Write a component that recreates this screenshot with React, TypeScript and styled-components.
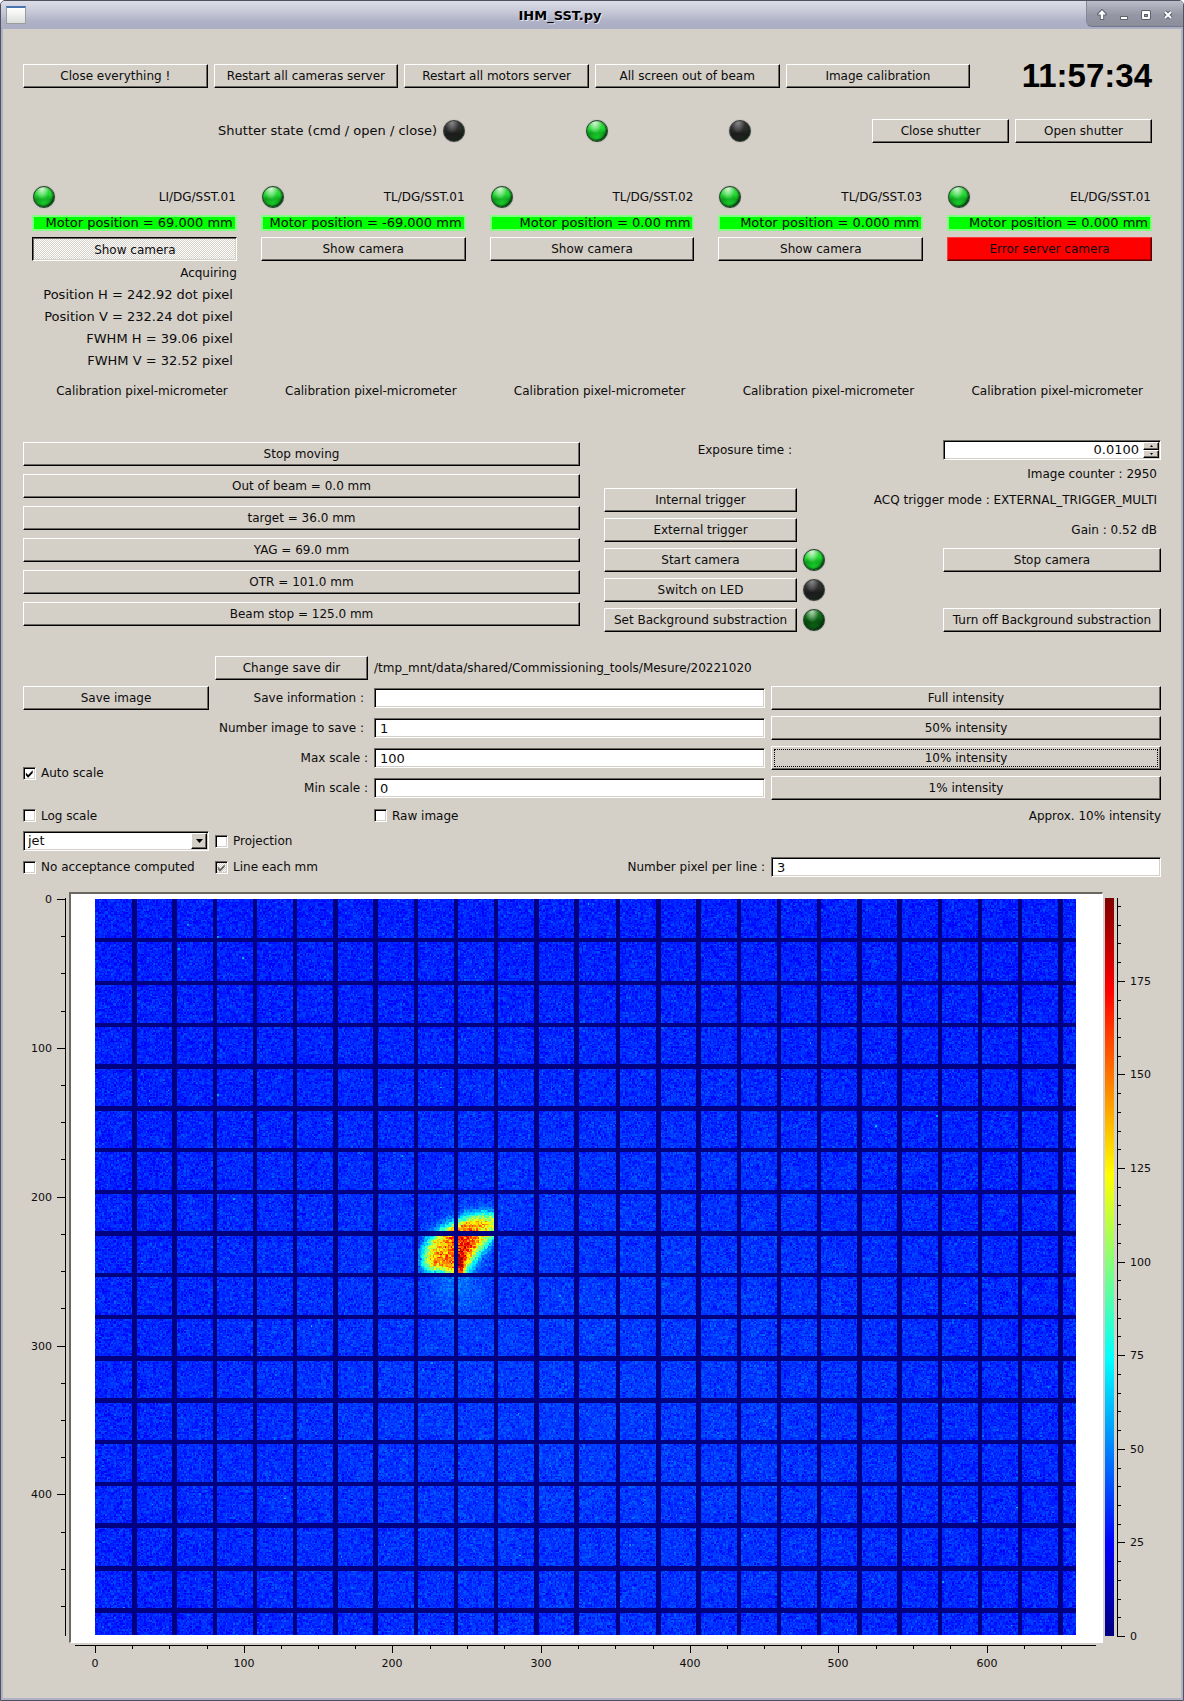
import React, { useEffect, useRef } from "react";
import styled, { createGlobalStyle, css } from "styled-components";

const FACE = "#d4cfc7";
const SHADE = "#6b6862";

const GlobalStyle = createGlobalStyle`
  *, *::before, *::after { box-sizing: border-box; }
  body {
    margin: 0;
    background: #fff;
    color: #0c0c0c;
    font: 12px/16px "DejaVu Sans", Verdana, sans-serif;
  }
  button, input, select { font: inherit; color: inherit; margin: 0; }
  input, select { font-size: 13px; }
`;

/* ---------- window chrome ---------- */

const Window = styled.div`
  min-height: 100vh;
  display: flex;
  flex-direction: column;
  border: 1px solid #50515f;
  border-radius: 5px 5px 0 0;
  background: #aeb1c5;
  overflow: hidden;
`;

const TitleBar = styled.header`
  height: 28px;
  display: flex;
  align-items: center;
  padding-left: 5px;
  background: linear-gradient(#dcdde7, #c3c5d5 45%, #b0b3c7 70%, #abaec3);
`;

const WindowIcon = styled.span`
  width: 20px;
  height: 18px;
  border: 1px solid #9a9c9e;
  border-top: 2px solid #4a74ad;
  background: linear-gradient(#ffffff, #dcdedb);
`;

const Title = styled.h1`
  flex: 1;
  margin: 0;
  padding: 2px 0 0 8px;
  font-size: 13px;
  line-height: 16px;
  font-weight: bold;
  text-align: center;
  color: #000;
  text-shadow: 1px 1px #e4e6f0;
`;

const WindowControls = styled.div`
  align-self: flex-start;
  height: 26px;
  display: flex;
  align-items: center;
  padding: 2px 4px 0 4px;
  border-left: 1px solid #85879a;
  border-bottom: 1px solid #74768a;
  border-bottom-left-radius: 6px;
  background: linear-gradient(#babcc8, #9597a5 55%, #8b8d9a);
`;

const ControlButton = styled.button`
  width: 22px;
  height: 22px;
  padding: 0;
  border: 0;
  background: none;
  display: grid;
  place-items: center;
`;

const Body = styled.main`
  flex: 1;
  margin: 0 2px 2px;
  padding: 35px 20px 29px;
  background: ${FACE};
`;

/* ---------- shared controls ---------- */

const Button = styled.button<{ $tone?: "pressed" | "error" | "focused" }>`
  width: 100%;
  height: 24px;
  padding: 0 2px 1px;
  border: 1px solid;
  border-color: #fff #000 #000 #fff;
  border-radius: 0;
  background: ${FACE};
  box-shadow: inset -1px -1px ${SHADE};
  line-height: 16px;
  text-align: center;
  white-space: nowrap;
  ${(p) =>
    p.$tone === "pressed" &&
    css`
      padding: 2px 1px 0 2px;
      border-color: #000 #fff #fff #000;
      background: repeating-conic-gradient(#ffffff 0 25%, ${FACE} 0 50%) 0 0 / 2px 2px;
      box-shadow: inset 1px 1px ${SHADE}, inset -1px -1px ${FACE};
    `}
  ${(p) =>
    p.$tone === "error" &&
    css`
      border-color: #ff3c3c #5a0000 #5a0000 #ff3c3c;
      background: #ff0000;
      box-shadow: inset -1px -1px #a80000;
    `}
  ${(p) =>
    p.$tone === "focused" &&
    css`
      outline: 1px dotted #000;
      outline-offset: -4px;
    `}
`;

const sunken = css`
  border: 1px solid;
  border-color: ${SHADE} #fff #fff ${SHADE};
  border-radius: 0;
  background: #fff;
  box-shadow: inset 1px 1px #000, inset -1px -1px ${FACE};
`;

const TextInput = styled.input`
  ${sunken}
  width: 100%;
  height: 20px;
  padding: 0 5px;
  align-self: center;
  outline: none;
`;

const ledFill = {
  on: "radial-gradient(ellipse at 40% 8%, #d8f5d8 0, #6fe07500 42%), radial-gradient(ellipse at 50% 100%, #19d02c 0, #0d8f1a00 60%), linear-gradient(#48d850, #22d932 38%, #0f9a1c 62%, #12a520)",
  dark: "radial-gradient(ellipse at 40% 8%, #b5d8b5 0, #2c7a3000 42%), radial-gradient(ellipse at 50% 100%, #0d6416 0, #06400b00 60%), linear-gradient(#1f7d27, #0d6a17 38%, #06450c 62%, #084d10)",
  off: "radial-gradient(ellipse at 40% 6%, #8a8a8a 0, #3a3a3a00 42%), linear-gradient(#3a3a3a, #2b2b2b 45%, #1b1b1b 65%, #242424)",
};

const Led = styled.span<{ $state: keyof typeof ledFill }>`
  display: block;
  width: 22px;
  height: 22px;
  flex: none;
  border: 1px solid ${(p) => (p.$state === "off" ? "#3c3c3c" : "#22402a")};
  border-radius: 50%;
  background: ${(p) => ledFill[p.$state]};
  box-shadow: inset -1px -1px 2px #0a260e, 0 0 1px #77777a;
`;

const CheckLabel = styled.label`
  display: flex;
  align-items: center;
  gap: 5px;
  white-space: nowrap;
`;

const CHECK = "M2 5v3l2.500 2.500 5-5v-3l-5 5z";

const CheckFrame = styled.span<{ $mixed?: boolean }>`
  ${sunken}
  position: relative;
  width: 13px;
  height: 13px;
  flex: none;
  ${(p) =>
    p.$mixed &&
    css`
      background: repeating-conic-gradient(#ffffff 0 25%, ${FACE} 0 50%) 0 0 / 2px 2px;
    `}
  input {
    position: absolute;
    inset: 0;
    opacity: 0;
  }
  svg {
    display: none;
    pointer-events: none;
  }
  input:checked + svg {
    display: block;
  }
`;

function Check({ text, checked, mixed }: { text: string; checked?: boolean; mixed?: boolean }) {
  return (
    <CheckLabel>
      <CheckFrame $mixed={mixed}>
        <input type="checkbox" defaultChecked={checked} />
        <svg width="11" height="11" viewBox="0 0 12 12" fill={mixed ? SHADE : "#000"}>
          <path d={CHECK} />
        </svg>
      </CheckFrame>
      {text}
    </CheckLabel>
  );
}

/* ---------- top rows ---------- */

const ServerRow = styled.section`
  display: grid;
  grid-template-columns: repeat(5, minmax(0, 21fr)) minmax(0, 20fr);
  column-gap: 6px;
  align-items: center;
  height: 24px;
  margin-right: 9px;
`;

const Clock = styled.time`
  font: bold 33px/24px "Liberation Sans", Arial, sans-serif;
  text-align: right;
  color: #000;
`;

const ShutterRow = styled.section`
  display: grid;
  grid-template-columns: minmax(0, 414fr) repeat(5, minmax(0, 137fr));
  column-gap: 6px;
  align-items: center;
  margin: 31px 9px 0 0;
`;

const RightText = styled.span<{ $inset?: number; $reading?: boolean }>`
  text-align: right;
  white-space: nowrap;
  padding-right: ${(p) => p.$inset ?? 0}px;
  font-size: ${(p) => (p.$reading ? 13 : 12)}px;
`;

/* ---------- camera columns ---------- */

const Cameras = styled.section`
  display: grid;
  grid-template-columns: repeat(5, minmax(0, 1fr));
  column-gap: 24px;
  margin: 42px 9px 0;
`;

const Camera = styled.article`
  display: flex;
  flex-direction: column;
`;

const CameraHead = styled.div`
  display: flex;
  align-items: center;
  justify-content: space-between;
  height: 24px;
  padding: 0 1px;
`;

const MotorPosition = styled.div`
  height: 16px;
  margin: 6px 0;
  padding-right: 2px;
  border: 2px solid #80ff80;
  background: #00ff00;
  font-size: 13px;
  line-height: 11px;
  text-align: right;
  white-space: nowrap;
`;

const Readings = styled.div`
  display: grid;
  row-gap: 6px;
  padding-top: 4px;
`;

const Calibration = styled.div`
  margin-top: auto;
  padding: 14px 9px 0 0;
  text-align: right;
`;

type CameraInfo = {
  name: string;
  motor: string;
  tone?: "pressed" | "error";
  button: string;
  readings?: string[];
};

const cameras: CameraInfo[] = [
  {
    name: "LI/DG/SST.01",
    motor: "69.000",
    tone: "pressed",
    button: "Show camera",
    readings: [
      "Position H = 242.92 dot pixel",
      "Position V = 232.24 dot pixel",
      "FWHM H = 39.06 pixel",
      "FWHM V = 32.52 pixel",
    ],
  },
  { name: "TL/DG/SST.01", motor: "-69.000", button: "Show camera" },
  { name: "TL/DG/SST.02", motor: "0.00", button: "Show camera" },
  { name: "TL/DG/SST.03", motor: "0.000", button: "Show camera" },
  { name: "EL/DG/SST.01", motor: "0.000", tone: "error", button: "Error server camera" },
];

/* ---------- motor and acquisition ---------- */

const Middle = styled.section`
  display: grid;
  grid-template-columns: repeat(2, minmax(0, 1fr));
  column-gap: 24px;
  margin-top: 41px;
`;

const MotorList = styled.div`
  display: grid;
  grid-auto-rows: 24px;
  align-content: start;
  row-gap: 8px;
  padding-top: 2px;
`;

const Acquisition = styled.div`
  display: grid;
  grid-template-columns: minmax(0, 193fr) minmax(0, 134fr) minmax(0, 218fr);
  grid-template-rows: 20px 16px repeat(5, 24px);
  gap: 6px;
  align-items: center;
`;

const Status = styled.output<{ $from: number }>`
  grid-column: ${(p) => p.$from} / 4;
  padding-right: 4px;
  text-align: right;
  white-space: nowrap;
`;

const LastCell = styled.div`
  grid-column: 3;
`;

const ExposureLabel = styled.label`
  grid-column: 1;
  padding-right: 5px;
  text-align: right;
`;

const SpinBox = styled.div`
  ${sunken}
  grid-column: 3;
  display: flex;
  height: 20px;
  padding: 1px;
  input {
    flex: 1;
    min-width: 0;
    padding: 0 4px 0 0;
    border: 0;
    outline: none;
    background: none;
    text-align: right;
  }
`;

const SpinButtons = styled.div`
  display: grid;
  grid-template-rows: 8px 8px;
  width: 16px;
  button {
    display: grid;
    place-items: center;
    padding: 0;
    border: 1px solid;
    border-color: #fff #000 #000 #fff;
    background: ${FACE};
    box-shadow: inset -1px -1px ${SHADE};
  }
  svg {
    display: block;
  }
`;

/* ---------- saving and display settings ---------- */

const Settings = styled.section`
  display: grid;
  grid-template-columns: minmax(0, 186fr) minmax(0, 153fr) minmax(0, 391fr) minmax(0, 390fr);
  grid-template-rows: repeat(5, 24px) 19px 20px 20px;
  gap: 6px;
  align-items: center;
  margin-top: 24px;
`;

const Cell = styled.div<{ $col: number; $row: string; $end?: boolean }>`
  grid-column: ${(p) => p.$col};
  grid-row: ${(p) => p.$row};
  display: flex;
  align-items: center;
  justify-content: ${(p) => (p.$end ? "flex-end" : "flex-start")};
`;

const FieldLabel = styled.label<{ $col: number; $row: number; $inset?: number }>`
  grid-column: ${(p) => p.$col};
  grid-row: ${(p) => p.$row};
  justify-self: end;
  padding-right: ${(p) => p.$inset ?? 0}px;
  white-space: nowrap;
`;

const ComboBox = styled.div`
  position: relative;
  width: 100%;
  select {
    ${sunken}
    display: block;
    appearance: none;
    width: 100%;
    height: 20px;
    padding: 0 20px 0 4px;
    outline: none;
  }
  span {
    position: absolute;
    top: 2px;
    right: 2px;
    width: 16px;
    height: 16px;
    display: grid;
    place-items: center;
    border: 1px solid;
    border-color: #fff #000 #000 #fff;
    background: ${FACE};
    box-shadow: inset -1px -1px ${SHADE};
    pointer-events: none;
  }
`;

/* ---------- plot ---------- */

const Plot = styled.section`
  display: grid;
  grid-template-columns: 46px minmax(0, 1fr) 58px;
  margin-top: 15px;
  svg {
    display: block;
  }
  text {
    font-size: 11px;
    fill: #0c0c0c;
  }
`;

const PlotFrame = styled.div`
  border-style: solid;
  border-width: 2px 1px 1px 2px;
  border-color: ${SHADE} #fff #fff ${SHADE};
  background: #fff;
  padding: 5px 26px 7px 24px;
`;

const ImageCanvas = styled.canvas`
  display: block;
  width: 100%;
  height: auto;
  aspect-ratio: 4 / 3;
  image-rendering: pixelated;
`;

const IMG_W = 659;
const IMG_H = 494;
const MAX = 197;

function jet(v: number): [number, number, number] {
  const t = Math.max(0, Math.min(1, v / MAX));
  const ch = (c: number) => 255 * Math.max(0, Math.min(1, 1.5 - Math.abs(4 * t - c)));
  return [ch(3), ch(2), ch(1)];
}

// Half-intensity outline of the beam spot, in image pixels.
const outline: [number, number][] = [
  [221, 244], [221, 236], [225, 228], [232, 222], [241, 217], [250, 213], [259, 211], [268, 212],
  [271, 218], [268, 225], [262, 231], [256, 238], [250, 246], [247, 252], [240, 251], [231, 249], [224, 248],
];

function insideDistance(x: number, y: number) {
  let best = 1e9;
  let inside = false;
  for (let i = 0, j = outline.length - 1; i < outline.length; j = i++) {
    const [x1, y1] = outline[j];
    const [x2, y2] = outline[i];
    const dx = x2 - x1;
    const dy = y2 - y1;
    const t = Math.max(0, Math.min(1, ((x - x1) * dx + (y - y1) * dy) / (dx * dx + dy * dy)));
    best = Math.min(best, Math.hypot(x - x1 - t * dx, y - y1 - t * dy));
    if (y1 > y !== y2 > y && x < ((x1 - x2) * (y - y2)) / (y1 - y2) + x2) inside = !inside;
  }
  return inside ? best : -best;
}

const bump = (x: number, y: number, cx: number, cy: number, sx: number, sy: number) =>
  Math.exp(-(((x - cx) / sx) ** 2 + ((y - cy) / sy) ** 2) / 2);

function paint(ctx: CanvasRenderingContext2D) {
  let seed = 20221020;
  const rnd = () => {
    seed = (seed + 0x6d2b79f5) | 0;
    let t = Math.imul(seed ^ (seed >>> 15), 1 | seed);
    t = (t + Math.imul(t ^ (t >>> 7), 61 | t)) ^ t;
    return ((t ^ (t >>> 14)) >>> 0) / 4294967296;
  };
  const col = new Set<number>();
  const row = new Set<number>();
  for (let k = 1; k <= 24; k++)
    for (let w = 0; w < 3; w++) {
      col.add(Math.floor(27.04 * k - 1.5) + w);
      if (k <= 17) row.add(Math.floor(28.07 * k - 1.1) + w);
    }
  const img = ctx.createImageData(IMG_W, IMG_H);
  for (let y = 0; y < IMG_H; y++)
    for (let x = 0; x < IMG_W; x++) {
      const noise = rnd() + rnd() + rnd() - 1.5;
      let v = 0;
      if (!col.has(x) && !row.has(y)) {
        v = 30 + 6 * bump(x, y, 330, 330, 210, 170) + noise * 9;
        if (rnd() > 0.9997) v += 22;
        v += 12 * bump(x, y, 243, 255, 10, 14);
        if (x > 215 && x < 270 && y > 195 && y < 251) {
          const s = 1 / (1 + Math.exp(-insideDistance(x, y) / 2.2));
          v += s * (98 + noise * 18);
          v += s * 34 * bump(x, y, 247, 229, 7, 8);
          v += s * 16 * bump(x, y, 232, 244, 10, 4);
          v += 50 * bump(x, y, 245, 246, 2, 6);
        }
      }
      const [r, g, b] = jet(v);
      img.data.set([r, g, b, 255], (y * IMG_W + x) * 4);
    }
  ctx.putImageData(img, 0, 0);
}

function BeamImage() {
  const ref = useRef<HTMLCanvasElement>(null);
  useEffect(() => {
    const ctx = ref.current?.getContext("2d");
    if (ctx) paint(ctx);
  }, []);
  return <ImageCanvas ref={ref} width={IMG_W} height={IMG_H} role="img" aria-label="Camera image" />;
}

const steps = (last: number, step: number) =>
  Array.from({ length: Math.floor(last / step) + 1 }, (_, i) => i * step);

function VerticalAxis() {
  return (
    <svg viewBox="0 0 46 751" width="46" height="100%" shapeRendering="crispEdges">
      <rect x="42" y="6" width="1" height="738" />
      {steps(475, 25).map((v) => {
        const y = Math.round(7 + v * 1.4885);
        const major = v % 100 === 0;
        return (
          <React.Fragment key={v}>
            <rect x={major ? 34 : 38} y={y} width={major ? 8 : 4} height="1" />
            {major && <text x="29" y={y + 4} textAnchor="end">{v}</text>}
          </React.Fragment>
        );
      })}
    </svg>
  );
}

function HorizontalAxis() {
  return (
    <svg viewBox="0 0 1034 26" width="100%" shapeRendering="crispEdges">
      <rect x="6" y="2" width="1021" height="1" />
      {steps(650, 25).map((v) => {
        const x = Math.round(26 + v * 1.4868);
        const major = v % 100 === 0;
        return (
          <React.Fragment key={v}>
            <rect x={x} y="3" width="1" height={major ? 7 : 3} />
            {major && <text x={x} y="24" textAnchor="middle">{v}</text>}
          </React.Fragment>
        );
      })}
    </svg>
  );
}

function ColorScale() {
  return (
    <svg viewBox="0 0 58 751" width="58" height="100%" shapeRendering="crispEdges">
      <defs>
        <linearGradient id="jet" x1="0" y1="1" x2="0" y2="0">
          <stop offset="0" stopColor="#000080" />
          <stop offset="0.125" stopColor="#0000ff" />
          <stop offset="0.375" stopColor="#00ffff" />
          <stop offset="0.625" stopColor="#ffff00" />
          <stop offset="0.875" stopColor="#ff0000" />
          <stop offset="1" stopColor="#800000" />
        </linearGradient>
      </defs>
      <rect x="2" y="6" width="9" height="738" fill="url(#jet)" />
      <rect x="14" y="6" width="1" height="739" />
      {steps(195, 5).map((v) => {
        const y = Math.round(744 - v * 3.744);
        const major = v % 25 === 0;
        return (
          <React.Fragment key={v}>
            <rect x="15" y={y} width={major ? 7 : 3} height="1" />
            {major && <text x="27" y={y + 4}>{v}</text>}
          </React.Fragment>
        );
      })}
    </svg>
  );
}

const Glyph = ({ d, fill }: { d: string; fill?: boolean }) => (
  <svg width="14" height="14" viewBox="0 0 14 14" fill="none" strokeLinejoin="round">
    <path d={d} stroke="#5e606e" strokeWidth={fill ? 2 : 4} />
    <path d={d} stroke="#fff" strokeWidth={fill ? 0 : 2} fill={fill ? "#fff" : "none"} />
  </svg>
);

const fields = [
  { id: "info", label: "Save information :", value: "", inset: 4, button: "Full intensity" },
  { id: "count", label: "Number image to save :", value: "1", inset: 4, button: "50% intensity" },
  { id: "max", label: "Max scale :", value: "100", inset: 0, button: "10% intensity" },
  { id: "min", label: "Min scale :", value: "0", inset: 0, button: "1% intensity" },
];

export default function App() {
  return (
    <>
      <GlobalStyle />
      <Window>
        <TitleBar>
          <WindowIcon />
          <Title>IHM_SST.py</Title>
          <WindowControls>
            <ControlButton aria-label="Shade"><Glyph fill d="M7 2l4 4.500H8.200V11H5.800V6.500H3z" /></ControlButton>
            <ControlButton aria-label="Minimize"><Glyph fill d="M4 9h6v2H4z" /></ControlButton>
            <ControlButton aria-label="Maximize"><Glyph d="M4 4h6v6H4zM4 5h6" /></ControlButton>
            <ControlButton aria-label="Close"><Glyph d="M4 4l6 6M10 4l-6 6" /></ControlButton>
          </WindowControls>
        </TitleBar>

        <Body>
          <ServerRow>
            <Button>Close everything !</Button>
            <Button>Restart all cameras server</Button>
            <Button>Restart all motors server</Button>
            <Button>All screen out of beam</Button>
            <Button>Image calibration</Button>
            <Clock>11:57:34</Clock>
          </ServerRow>

          <ShutterRow>
            <RightText $reading>Shutter state (cmd / open / close)</RightText>
            <Led $state="off" />
            <Led $state="on" />
            <Led $state="off" />
            <Button>Close shutter</Button>
            <Button>Open shutter</Button>
          </ShutterRow>

          <Cameras>
            {cameras.map((c) => (
              <Camera key={c.name}>
                <CameraHead>
                  <Led $state="on" />
                  <span>{c.name}</span>
                </CameraHead>
                <MotorPosition>Motor position = {c.motor} mm</MotorPosition>
                <Button $tone={c.tone}>{c.button}</Button>
                {c.readings && (
                  <Readings>
                    <RightText>Acquiring</RightText>
                    {c.readings.map((r) => (
                      <RightText key={r} $inset={4} $reading>{r}</RightText>
                    ))}
                  </Readings>
                )}
                <Calibration>Calibration pixel-micrometer</Calibration>
              </Camera>
            ))}
          </Cameras>

          <Middle>
            <MotorList>
              <Button>Stop moving</Button>
              <Button>Out of beam = 0.0 mm</Button>
              <Button>target = 36.0 mm</Button>
              <Button>YAG = 69.0 mm</Button>
              <Button>OTR = 101.0 mm</Button>
              <Button>Beam stop = 125.0 mm</Button>
            </MotorList>

            <Acquisition>
              <ExposureLabel htmlFor="exposure">Exposure time :</ExposureLabel>
              <SpinBox>
                <input id="exposure" inputMode="decimal" defaultValue="0.0100" />
                <SpinButtons>
                  <button aria-label="Increase"><svg width="3" height="2"><path d="M0 2L1.500 0L3 2z" /></svg></button>
                  <button aria-label="Decrease"><svg width="3" height="2"><path d="M0 0L1.500 2L3 0z" /></svg></button>
                </SpinButtons>
              </SpinBox>
              <Status $from={2}>Image counter : 2950</Status>
              <Button>Internal trigger</Button>
              <Status $from={2}>ACQ trigger mode : EXTERNAL_TRIGGER_MULTI</Status>
              <Button>External trigger</Button>
              <Status $from={2}>Gain : 0.52 dB</Status>
              <Button>Start camera</Button>
              <Led $state="on" />
              <Button>Stop camera</Button>
              <Button>Switch on LED</Button>
              <Led $state="off" />
              <LastCell />
              <Button>Set Background substraction</Button>
              <Led $state="dark" />
              <Button>Turn off Background substraction</Button>
            </Acquisition>
          </Middle>

          <Settings>
            <Cell $col={2} $row="1"><Button>Change save dir</Button></Cell>
            <Cell $col={3} $row="1">/tmp_mnt/data/shared/Commissioning_tools/Mesure/20221020</Cell>
            <Cell $col={1} $row="2"><Button>Save image</Button></Cell>
            {fields.map((f, i) => (
              <React.Fragment key={f.id}>
                <FieldLabel htmlFor={f.id} $col={2} $row={i + 2} $inset={f.inset}>{f.label}</FieldLabel>
                <Cell $col={3} $row={`${i + 2}`}><TextInput id={f.id} defaultValue={f.value} /></Cell>
                <Cell $col={4} $row={`${i + 2}`}>
                  <Button $tone={f.id === "max" ? "focused" : undefined}>{f.button}</Button>
                </Cell>
              </React.Fragment>
            ))}
            <Cell $col={1} $row="4 / 6"><Check text="Auto scale" checked /></Cell>
            <Cell $col={1} $row="6"><Check text="Log scale" /></Cell>
            <Cell $col={3} $row="6"><Check text="Raw image" /></Cell>
            <Cell $col={4} $row="6" $end>Approx. 10% intensity</Cell>
            <Cell $col={1} $row="7">
              <ComboBox>
                <select aria-label="Color map" defaultValue="jet"><option>jet</option></select>
                <span><svg width="7" height="4"><path d="M0 0h7L3.500 4z" /></svg></span>
              </ComboBox>
            </Cell>
            <Cell $col={2} $row="7"><Check text="Projection" /></Cell>
            <Cell $col={1} $row="8"><Check text="No acceptance computed" /></Cell>
            <Cell $col={2} $row="8"><Check text="Line each mm" checked mixed /></Cell>
            <FieldLabel htmlFor="pixels" $col={3} $row={8}>Number pixel per line :</FieldLabel>
            <Cell $col={4} $row="8"><TextInput id="pixels" defaultValue="3" /></Cell>
          </Settings>

          <Plot>
            <VerticalAxis />
            <PlotFrame><BeamImage /></PlotFrame>
            <ColorScale />
            <span />
            <HorizontalAxis />
          </Plot>
        </Body>
      </Window>
    </>
  );
}
